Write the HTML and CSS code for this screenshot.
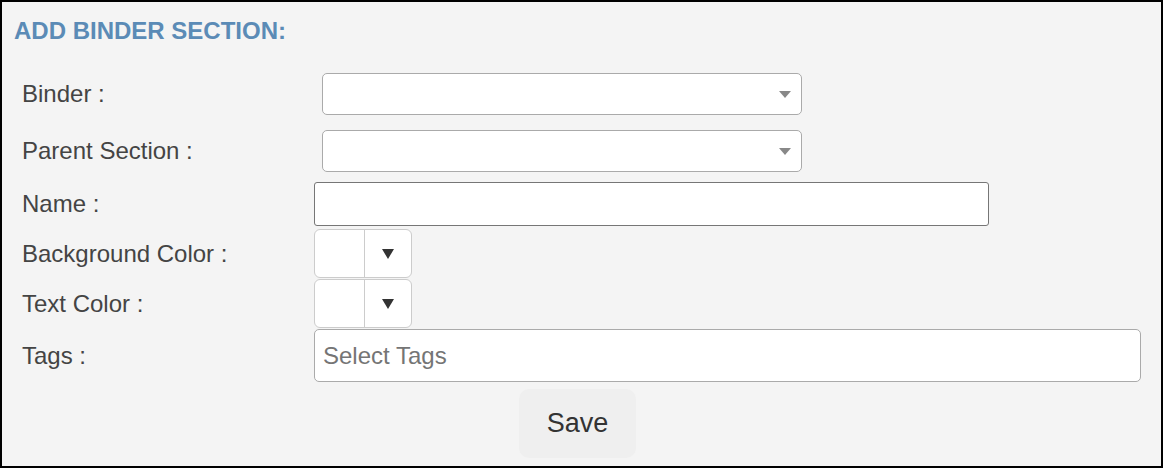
FILE: index.html
```html
<!DOCTYPE html>
<html lang="en">
<head>
    <meta charset="UTF-8">
    <meta name="viewport" content="width=device-width, initial-scale=1.0">
    <title>Add Binder Section</title>
    <link rel="stylesheet" href="styles.css">
</head>
<body>
    <div class="panel">
        <h1 class="title">ADD BINDER SECTION:</h1>
        <form class="binder-form" onsubmit="return false">
            <div class="row row-binder">
                <label class="row-label">Binder :</label>
                <div class="select-box">
                    <span class="select-arrow"></span>
                </div>
            </div>
            <div class="row row-parent">
                <label class="row-label">Parent Section :</label>
                <div class="select-box">
                    <span class="select-arrow"></span>
                </div>
            </div>
            <div class="row row-name">
                <label class="row-label" for="name">Name :</label>
                <input type="text" id="name" class="text-input">
            </div>
            <div class="row row-bg">
                <label class="row-label">Background Color :</label>
                <div class="color-picker">
                    <span class="color-swatch"></span>
                    <span class="color-toggle"><span class="color-arrow"></span></span>
                </div>
            </div>
            <div class="row row-text">
                <label class="row-label">Text Color :</label>
                <div class="color-picker">
                    <span class="color-swatch"></span>
                    <span class="color-toggle"><span class="color-arrow"></span></span>
                </div>
            </div>
            <div class="row row-tags">
                <label class="row-label" for="tags">Tags :</label>
                <input type="text" id="tags" class="tags-input" placeholder="Select Tags">
            </div>
            <div class="actions">
                <button type="submit" class="save-btn">Save</button>
            </div>
        </form>
    </div>
</body>
</html>
```

FILE: styles.css
```css
/* styles.css */
body {
    margin: 0;
    font-family: "Liberation Sans", Arial, sans-serif;
}

.panel {
    box-sizing: border-box;
    width: 1163px;
    height: 468px;
    border: 2px solid #000;
    background-color: #f4f4f4;
    overflow: hidden;
}

.title {
    margin: 15px 0 0 12px;
    font-size: 24px;
    font-weight: bold;
    line-height: 28px;
    color: #5b8bb6;
}

.binder-form {
    padding-left: 20px;
}

.row {
    display: flex;
    align-items: center;
}

.row-label {
    width: 292px;
    flex-shrink: 0;
    font-size: 24px;
    color: #444;
}

.row-binder { margin-top: 28px; }
.row-parent { margin-top: 15px; }
.row-name { margin-top: 10px; }
.row-bg { margin-top: 3px; }
.row-text { margin-top: 1px; }
.row-tags { margin-top: 1px; }

.select-box {
    box-sizing: border-box;
    width: 480px;
    height: 42px;
    margin-left: 8px;
    background-color: #fff;
    border: 1px solid #aaa;
    border-radius: 5px;
    display: flex;
    align-items: center;
    justify-content: flex-end;
    padding-right: 10px;
}

.select-arrow {
    width: 0;
    height: 0;
    border-style: solid;
    border-width: 7px 6px 0 6px;
    border-color: #888 transparent transparent transparent;
}

.text-input {
    box-sizing: border-box;
    width: 675px;
    height: 44px;
    margin: 0;
    background-color: #fff;
    border: 1px solid #767676;
    border-radius: 3px;
}

.color-picker {
    box-sizing: border-box;
    width: 98px;
    height: 49px;
    display: flex;
    background-color: #fff;
    border: 1px solid #ccc;
    border-radius: 6px;
}

.color-swatch {
    width: 49px;
    border-right: 1px solid #ccc;
}

.color-toggle {
    flex: 1;
    display: flex;
    align-items: center;
    justify-content: center;
}

.color-arrow {
    width: 0;
    height: 0;
    border-style: solid;
    border-width: 10px 6px 0 6px;
    border-color: #333 transparent transparent transparent;
}

.tags-input {
    box-sizing: border-box;
    width: 827px;
    height: 53px;
    margin: 0;
    padding: 0 8px;
    font-family: "Liberation Sans", Arial, sans-serif;
    font-size: 24px;
    color: #444;
    background-color: #fff;
    border: 1px solid #aaa;
    border-radius: 5px;
}

.tags-input::placeholder {
    color: #757575;
}

.actions {
    margin-top: 7px;
    padding-left: 497px;
}

.save-btn {
    width: 117px;
    height: 69px;
    font-family: "Liberation Sans", Arial, sans-serif;
    font-size: 27px;
    color: #333;
    background-color: #efefef;
    border: none;
    border-radius: 10px;
    cursor: pointer;
}
```
